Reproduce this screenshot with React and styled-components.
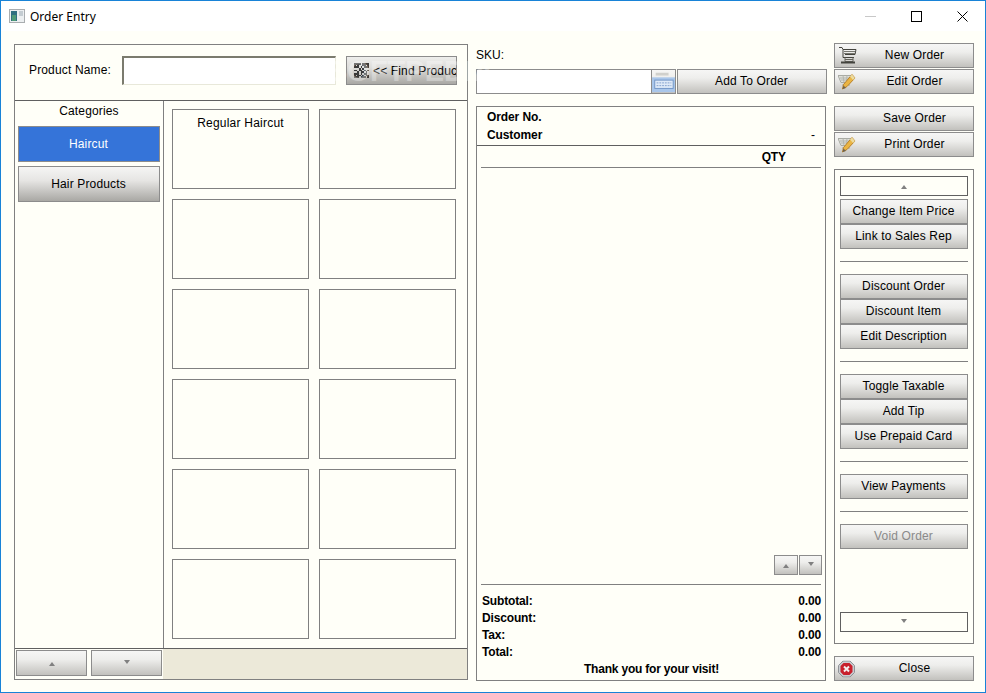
import React from "react";
import styled, { createGlobalStyle, css } from "styled-components";

const GlobalStyle = createGlobalStyle`
  html, body { margin: 0; padding: 0; background: #fff; }
  body { font-family: "Liberation Sans", Arial, sans-serif; font-size: 12px; color: #000; }
`;

const LINE = "#808080";
const gradient = "linear-gradient(#f6f6f5 0%, #eeeeec 35%, #c2c1bd 100%)";

const Win = styled.div`
  position: relative;
  width: 986px;
  height: 693px;
  box-sizing: border-box;
  border: 1px solid #1883d7;
  display: flex;
  flex-direction: column;
  background: #fffff8;
  overflow: hidden;
`;
const TitleBar = styled.div`
  height: 30px;
  background: #fff;
  display: flex;
  align-items: center;
  padding-left: 8px;
  flex: none;
`;
const TitleText = styled.span`
  font-family: "Noto Sans", "Open Sans", sans-serif;
  font-size: 12px;
  margin-left: 5px;
  flex: 1;
`;
const Ctl = styled.div`
  width: 46px;
  height: 30px;
  display: flex;
  align-items: center;
  justify-content: center;
`;
const Body = styled.div`
  flex: 1;
  min-height: 0;
  display: flex;
  padding: 12px 11px 11px 13px;
`;

const Left = styled.div`
  width: 454px;
  margin-top: 1px;
  margin-bottom: 1px;
  box-sizing: border-box;
  border: 1px solid ${LINE};
  display: flex;
  flex-direction: column;
`;
const SearchRow = styled.div`
  height: 56px;
  flex: none;
  box-sizing: border-box;
  border-bottom: 1px solid #606060;
  padding: 11px 10px 0 14px;
  display: flex;
  align-items: flex-start;
`;
const FieldLabel = styled.span`
  width: 93px;
  line-height: 29px;
  white-space: nowrap;
  letter-spacing: 0.15px;
`;
const ProductInput = styled.div`
  width: 215px;
  height: 29px;
  box-sizing: border-box;
  background: #fff;
  border: 1px solid #e8e8da;
  border-top: 2px solid #7b7b6e;
  border-left: 2px solid #7b7b6e;
`;
const Btn = styled.button`
  box-sizing: border-box;
  width: ${(p) => p.$w || "100%"};
  height: ${(p) => p.$h || "25px"};
  padding: 0 1px 2px ${(p) => p.$offset || "0"};
  margin: 0;
  border: 1px solid #8c8c8c;
  background: ${gradient};
  font: 12px "Liberation Sans", Arial, sans-serif;
  letter-spacing: 0.15px;
  color: ${(p) => (p.disabled ? "#8a8a8a" : "#000")};
  display: flex;
  align-items: center;
  justify-content: center;
  flex: none;
  position: relative;
  white-space: nowrap;
  overflow: hidden;
`;
const ArrowBtn = styled(Btn)`
  padding: 0;
`;
const FindBtn = styled(Btn)`
  margin-left: 10px;
  justify-content: flex-start;
  padding: 0 0 0 7px;
  gap: 4px;
  background: linear-gradient(#eeeeec 0%, #dddcd9 40%, #a9a8a4 100%);
  svg {
    flex: none;
  }
`;
const IconSlot = styled.span`
  position: absolute;
  left: ${(p) => p.$left || "3px"};
  top: 50%;
  transform: translateY(-50%);
  display: flex;
`;
const Browse = styled.div`
  flex: 1;
  min-height: 0;
  display: flex;
`;
const CatCol = styled.div`
  width: 149px;
  flex: none;
  box-sizing: border-box;
  border-right: 1px solid ${LINE};
  padding: 0 3px;
  display: flex;
  flex-direction: column;
  align-items: center;
`;
const CatTitle = styled.div`
  height: 25px;
  line-height: 20px;
  letter-spacing: 0.15px;
`;
const CatBtn = styled(Btn)`
  height: 36px;
  padding: 0 1px 0 0;
  margin-bottom: 4px;
  background: linear-gradient(#f5f5f4 0%, #e6e5e3 40%, #a9a8a4 100%);
  ${(p) =>
    p.$active &&
    css`
      background: #3574d9;
      color: #fff;
    `}
`;
const Cells = styled.div`
  flex: 1;
  padding: 8px 11px 0 8px;
  display: grid;
  grid-template-columns: 137px 137px;
  grid-auto-rows: 80px;
  column-gap: 10px;
  row-gap: 10px;
  align-content: start;
`;
const Cell = styled.div`
  border: 1px solid ${LINE};
  text-align: center;
  padding-top: 6px;
  letter-spacing: 0.22px;
  box-sizing: border-box;
`;
const PagerBar = styled.div`
  height: 31px;
  flex: none;
  box-sizing: border-box;
  border-top: 1px solid #606060;
  display: flex;
  background: linear-gradient(90deg, #fffff8 148px, #ece9d9 148px);
  padding: 1px 0 3px 1px;
  gap: 4px;
`;
const Arrow = styled.i`
  display: block;
  width: 0;
  height: 0;
  border-left: 3px solid transparent;
  border-right: 3px solid transparent;
  ${(p) =>
    p.$down
      ? css`
          border-top: 4px solid #808080;
          margin-bottom: 2px;
        `
      : css`
          border-bottom: 4px solid #808080;
          margin-top: 2px;
        `}
`;

const Middle = styled.div`
  width: 351px;
  margin: 1px 7px 0 8px;
  flex: none;
  display: flex;
  flex-direction: column;
`;
const SkuLabel = styled.div`
  height: 25px;
  line-height: 22px;
`;
const SkuRow = styled.div`
  display: flex;
  height: 25px;
  flex: none;
`;
const SkuInput = styled.div`
  width: 175px;
  box-sizing: border-box;
  border: 1px solid #8c8c8c;
  border-right: none;
  background: #fff;
`;
const KeyBtn = styled(ArrowBtn)`
  margin-right: 1px;
`;
const OrderPanel = styled.div`
  flex: 1;
  min-height: 0;
  margin-top: 12px;
  margin-right: 1px;
  box-sizing: border-box;
  border: 1px solid ${LINE};
  display: flex;
  flex-direction: column;
`;
const OrderHead = styled.div`
  height: 39px;
  flex: none;
  box-sizing: border-box;
  border-bottom: 1px solid #606060;
  padding: 1px 10px 0 10px;
  font-weight: bold;
  letter-spacing: -0.1px;
`;
const HeadRow = styled.div`
  height: 18px;
  line-height: 18px;
  display: flex;
  justify-content: space-between;
`;
const Dash = styled.span`
  font-weight: normal;
`;
const QtyRow = styled.div`
  height: 22px;
  flex: none;
  box-sizing: border-box;
  margin: 0 4px;
  border-bottom: 1px solid ${LINE};
  font-weight: bold;
  line-height: 23px;
  text-align: right;
  padding-right: 35px;
  letter-spacing: -0.1px;
`;
const Lines = styled.div`
  flex: 1;
  min-height: 0;
  display: flex;
  justify-content: flex-end;
  align-items: flex-end;
  gap: 1px;
  padding: 0 3px 9px 0;
`;
const Totals = styled.div`
  flex: none;
  margin: 0 4px;
  border-top: 1px solid ${LINE};
  padding: 8px 0 2px 1px;
  font-weight: bold;
`;
const TotalRow = styled.div`
  height: 17px;
  line-height: 16px;
  display: flex;
  justify-content: space-between;
  letter-spacing: -0.15px;
`;
const Thanks = styled.div`
  text-align: center;
  height: 17px;
  line-height: 16px;
  letter-spacing: -0.2px;
`;

const Right = styled.div`
  width: 140px;
  flex: none;
  display: flex;
  flex-direction: column;
  gap: 12px;
`;
const Stack = styled.div`
  display: flex;
  flex-direction: column;
  gap: ${(p) => p.$gap || "0"};
  margin-top: ${(p) => p.$top || "0"};
`;
const ActionPanel = styled.div`
  flex: 1;
  min-height: 0;
  box-sizing: border-box;
  border: 1px solid ${LINE};
  padding: 6px 5px 11px;
  display: flex;
  flex-direction: column;
`;
const ScrollBtn = styled.div`
  height: 20px;
  flex: none;
  box-sizing: border-box;
  border: 1px solid #606060;
  padding-right: 1px;
  display: flex;
  align-items: center;
  justify-content: center;
`;
const Sep = styled.div`
  height: 1px;
  flex: none;
  background: ${LINE};
  margin: 12px 0;
`;
const Spacer = styled.div`
  flex: 1;
`;
const Watermark = styled.span`
  position: absolute;
  left: 327px;
  top: 54px;
  font: bold 29px "Liberation Sans", Arial, sans-serif;
  color: #fff;
  opacity: 0.3;
  pointer-events: none;
`;

const AppIcon = () => (
  <svg width="16" height="14" viewBox="0 0 16 14">
    <rect x="0.5" y="0.5" width="15" height="13" fill="#eceff1" stroke="#a9adb0" />
    <rect x="2" y="2" width="6" height="10" fill="#2f6f80" />
    <rect x="3" y="6" width="4" height="6" fill="#4f9a78" />
    <rect x="10" y="2" width="4" height="5" fill="#c4ccd2" />
  </svg>
);

const CartIcon = () => (
  <svg width="18" height="18" viewBox="0 0 18 18" fill="none" stroke="#44443e">
    <path d="M0 .5h3l1 2h13l-1 5H6" />
    <path d="M5 4.500h11M5 6.500h11" stroke="#77776f" />
    <path d="M4 2.500v8h11" />
    <path d="M6 10.500v4h8v-4" stroke="#66665e" />
    <path d="M6 12.500h8" stroke="#66665e" />
    <path d="M2 15.500h14" strokeWidth="2" />
  </svg>
);

const CartEditIcon = () => (
  <svg width="18" height="17" viewBox="0 0 18 17" fill="none">
    <path d="M0 2h14l-2 7H3z" fill="#dfe0da" stroke="#a8aaa3" />
    <path d="M2 4.500h10M3 6.500h9M5 2l1 7M9 2l-.5 7" stroke="#b4b6af" />
    <path d="M4 11.500h8" stroke="#a8aaa3" />
    <path d="M14 1l3 3.500-8 8.500-4.500 2.500 1-4.500z" fill="#eab544" stroke="#b9822a" />
    <path d="M14 1l3 3.500-2 2-3-3.500z" fill="#ecdca0" />
    <path d="M4.500 15.500l1-3.500 2.500 2.500z" fill="#6d6250" />
  </svg>
);

const qr = [
  "111101111",
  "101001101",
  "111010111",
  "000101000",
  "110110101",
  "001011010",
  "111010110",
  "101101011",
  "111011101",
];
const QrIcon = () => (
  <svg width="15" height="15" viewBox="0 0 9 9" shapeRendering="crispEdges">
    {qr.map((row, y) =>
      row.split("").map((c, x) => (c === "1" ? <rect key={x + "-" + y} x={x} y={y} width="1" height="1" fill="#3a3a3a" /> : null))
    )}
  </svg>
);

const KeyboardIcon = () => (
  <svg width="25" height="25" viewBox="0 0 25 25" fill="none">
    <rect x="4" y="3" width="14" height="3" fill="#d0d0cc" />
    <rect x="0" y="8" width="25" height="16" fill="#a9c6ea" />
    <rect x="3" y="11" width="20" height="9" fill="#dfeaf8" stroke="#6f93c4" />
    <path d="M5 14h16M5 17h16" stroke="#7f9ecb" strokeDasharray="2 1" />
  </svg>
);

const CloseIcon = () => (
  <svg width="17" height="17" viewBox="0 0 17 17">
    <path d="M5 .5h7L16.500 5v7L12 16.500H5L.5 12V5z" fill="#c9ccd0" stroke="#8f9296" />
    <path d="M5.500 2.500h6l3 3v6l-3 3h-6l-3-3v-6z" fill="#c8202c" />
    <path d="M6 6l5 5M11 6l-5 5" stroke="#f4eeee" strokeWidth="2" />
  </svg>
);

const cells = ["Regular Haircut", "", "", "", "", "", "", "", "", "", "", ""];
const sections = [
  ["Change Item Price", "Link to Sales Rep"],
  ["Discount Order", "Discount Item", "Edit Description"],
  ["Toggle Taxable", "Add Tip", "Use Prepaid Card"],
  ["View Payments"],
];
const totals = [
  ["Subtotal:", "0.00"],
  ["Discount:", "0.00"],
  ["Tax:", "0.00"],
  ["Total:", "0.00"],
];

export default function App() {
  return (
    <Win>
      <GlobalStyle />
      <TitleBar>
        <AppIcon />
        <TitleText>Order Entry</TitleText>
        <Ctl>
          <svg width="11" height="11"><path d="M0 5.500h11" stroke="#c8c8c8" /></svg>
        </Ctl>
        <Ctl>
          <svg width="11" height="11"><rect x="0.5" y="0.5" width="10" height="10" fill="none" stroke="#000" /></svg>
        </Ctl>
        <Ctl>
          <svg width="11" height="11"><path d="M.5.5l10 10M10.500.5l-10 10" stroke="#000" /></svg>
        </Ctl>
      </TitleBar>
      <Body>
        <Left>
          <SearchRow>
            <FieldLabel>Product Name:</FieldLabel>
            <ProductInput />
            <FindBtn $w="111px" $h="29px">
              <QrIcon />
              {"<< Find Product"}
            </FindBtn>
          </SearchRow>
          <Browse>
            <CatCol>
              <CatTitle>Categories</CatTitle>
              <CatBtn $active>Haircut</CatBtn>
              <CatBtn>Hair Products</CatBtn>
            </CatCol>
            <Cells>
              {cells.map((c, i) => (
                <Cell key={i}>{c}</Cell>
              ))}
            </Cells>
          </Browse>
          <PagerBar>
            <ArrowBtn $w="71px" $h="26px"><Arrow /></ArrowBtn>
            <ArrowBtn $w="71px" $h="26px"><Arrow $down /></ArrowBtn>
          </PagerBar>
        </Left>
        <Middle>
          <SkuLabel>SKU:</SkuLabel>
          <SkuRow>
            <SkuInput />
            <KeyBtn $w="25px"><KeyboardIcon /></KeyBtn>
            <Btn $w="150px">Add To Order</Btn>
          </SkuRow>
          <OrderPanel>
            <OrderHead>
              <HeadRow>Order No.</HeadRow>
              <HeadRow>Customer<Dash>-</Dash></HeadRow>
            </OrderHead>
            <QtyRow>QTY</QtyRow>
            <Lines>
              <ArrowBtn $w="24px" $h="20px"><Arrow /></ArrowBtn>
              <ArrowBtn $w="23px" $h="20px"><Arrow $down /></ArrowBtn>
            </Lines>
            <Totals>
              {totals.map(([k, v]) => (
                <TotalRow key={k}>{k}<span>{v}</span></TotalRow>
              ))}
              <Thanks>Thank you for your visit!</Thanks>
            </Totals>
          </OrderPanel>
        </Middle>
        <Right>
          <Stack $gap="1px">
            <Btn $offset="22px"><IconSlot $left="4px"><CartIcon /></IconSlot>New Order</Btn>
            <Btn $offset="22px"><IconSlot><CartEditIcon /></IconSlot>Edit Order</Btn>
          </Stack>
          <Stack $gap="1px">
            <Btn $offset="22px">Save Order</Btn>
            <Btn $offset="22px"><IconSlot><CartEditIcon /></IconSlot>Print Order</Btn>
          </Stack>
          <ActionPanel>
            <ScrollBtn><Arrow /></ScrollBtn>
            <Stack $top="3px">
              {sections[0].map((s) => <Btn key={s}>{s}</Btn>)}
            </Stack>
            {sections.slice(1).map((sec) => (
              <React.Fragment key={sec[0]}>
                <Sep />
                <Stack>
                  {sec.map((s) => <Btn key={s}>{s}</Btn>)}
                </Stack>
              </React.Fragment>
            ))}
            <Sep />
            <Btn disabled>Void Order</Btn>
            <Spacer />
            <ScrollBtn><Arrow $down /></ScrollBtn>
          </ActionPanel>
          <Btn $offset="22px"><IconSlot><CloseIcon /></IconSlot>Close</Btn>
        </Right>
      </Body>
      <Watermark>SOFTPEDIA</Watermark>
    </Win>
  );
}
